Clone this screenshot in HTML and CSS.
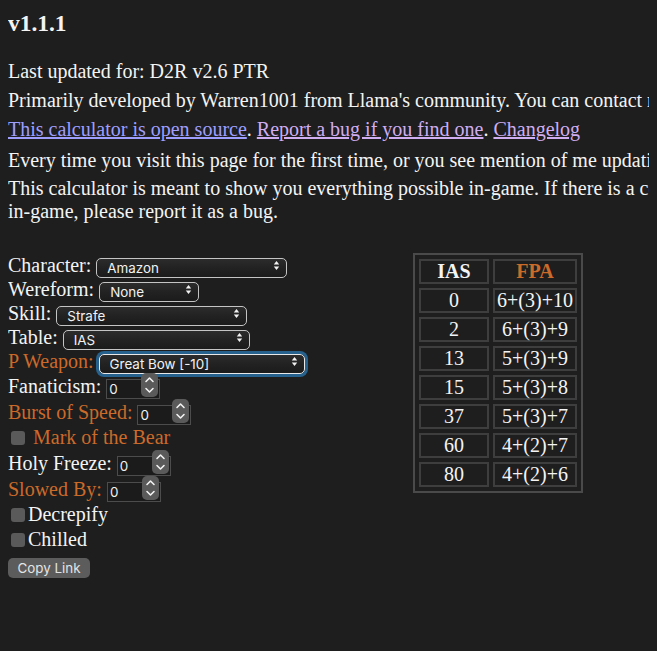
FILE: index.html
```html
<!DOCTYPE html>
<html lang="en">
<head>
<meta charset="utf-8">
<title>D2R Breakpoint Calculator</title>
<link rel="stylesheet" href="styles.css">
</head>
<body>
<h3 class="version">v1.1.1</h3>
<div class="intro">
  <p>Last updated for: D2R v2.6 PTR</p>
  <p>Primarily developed by Warren1001 from Llama's community. You can contact me on Discord.</p>
  <p class="links"><a class="link" href="#">This calculator is open source</a>. <a class="visited" href="#">Report a bug if you find one</a>. <a class="visited" href="#">Changelog</a></p>
  <p class="refresh">Every time you visit this page for the first time, or you see mention of me updating it, do a hard refresh.</p>
  <p>This calculator is meant to show you everything possible in-game. If there is a combination that is not possible <span class="nowrap">in-game,</span> please report it as a bug.</p>
</div>
<div class="main">
  <div class="form">
    <div class="row row-sel"><span class="lbl">Character:</span><span class="sel w-char"><select><option>Amazon</option></select><svg class="arrows" viewBox="0 0 7 11" width="7" height="11"><path d="M3.5 1 L6.2 4.6 H0.8 Z M3.5 10 L6.2 6.4 H0.8 Z"/></svg></span></div>
    <div class="row row-sel"><span class="lbl">Wereform:</span><span class="sel w-were"><select><option>None</option></select><svg class="arrows" viewBox="0 0 7 11" width="7" height="11"><path d="M3.5 1 L6.2 4.6 H0.8 Z M3.5 10 L6.2 6.4 H0.8 Z"/></svg></span></div>
    <div class="row row-sel"><span class="lbl">Skill:</span><span class="sel w-skill"><select><option>Strafe</option></select><svg class="arrows" viewBox="0 0 7 11" width="7" height="11"><path d="M3.5 1 L6.2 4.6 H0.8 Z M3.5 10 L6.2 6.4 H0.8 Z"/></svg></span></div>
    <div class="row row-sel"><span class="lbl">Table:</span><span class="sel w-table"><select><option>IAS</option></select><svg class="arrows" viewBox="0 0 7 11" width="7" height="11"><path d="M3.5 1 L6.2 4.6 H0.8 Z M3.5 10 L6.2 6.4 H0.8 Z"/></svg></span></div>
    <div class="row row-pw"><span class="lbl orange">P Weapon:</span><span class="sel w-weapon focused"><select><option>Great Bow [-10]</option></select><svg class="arrows" viewBox="0 0 7 11" width="7" height="11"><path d="M3.5 1 L6.2 4.6 H0.8 Z M3.5 10 L6.2 6.4 H0.8 Z"/></svg></span></div>
    <div class="row row-num"><span class="lbl">Fanaticism:</span><span class="num"><input type="number" value="0"><span class="spin"><svg viewBox="0 0 17 24" width="17" height="24"><path d="M5 8.5 L8.5 5 L12 8.5 M5 15.5 L8.5 19 L12 15.5"/></svg></span></span></div>
    <div class="row row-num"><span class="lbl orange">Burst of Speed:</span><span class="num"><input type="number" value="0"><span class="spin"><svg viewBox="0 0 17 24" width="17" height="24"><path d="M5 8.5 L8.5 5 L12 8.5 M5 15.5 L8.5 19 L12 15.5"/></svg></span></span></div>
    <div class="row row-chk"><input class="chk" type="checkbox"><span class="lbl orange chk-gap">Mark of the Bear</span></div>
    <div class="row row-num"><span class="lbl">Holy Freeze:</span><span class="num"><input type="number" value="0"><span class="spin"><svg viewBox="0 0 17 24" width="17" height="24"><path d="M5 8.5 L8.5 5 L12 8.5 M5 15.5 L8.5 19 L12 15.5"/></svg></span></span></div>
    <div class="row row-num"><span class="lbl orange">Slowed By:</span><span class="num"><input type="number" value="0"><span class="spin"><svg viewBox="0 0 17 24" width="17" height="24"><path d="M5 8.5 L8.5 5 L12 8.5 M5 15.5 L8.5 19 L12 15.5"/></svg></span></span></div>
    <div class="row row-chk"><input class="chk" type="checkbox"><span class="lbl">Decrepify</span></div>
    <div class="row row-chk"><input class="chk" type="checkbox"><span class="lbl">Chilled</span></div>
    <button class="copy" type="button">Copy Link</button>
  </div>
  <table class="bp">
    <thead>
      <tr><th class="c1">IAS</th><th class="c2 orange">FPA</th></tr>
    </thead>
    <tbody>
      <tr><td>0</td><td>6+(3)+10</td></tr>
      <tr><td>2</td><td>6+(3)+9</td></tr>
      <tr><td>13</td><td>5+(3)+9</td></tr>
      <tr><td>15</td><td>5+(3)+8</td></tr>
      <tr><td>37</td><td>5+(3)+7</td></tr>
      <tr><td>60</td><td>4+(2)+7</td></tr>
      <tr><td>80</td><td>4+(2)+6</td></tr>
    </tbody>
  </table>
</div>
</body>
</html>
```
FILE: styles.css
```css
html, body {
  overflow: hidden;
}
body {
  margin: 8px;
  background: #1e1e1e;
  color: #f4f4f4;
  font-family: "Liberation Serif", "Times New Roman", serif;
  font-size: 20px;
  line-height: 23px;
}
.version {
  margin: 2px 0 23px;
  font-size: 23.4px;
  line-height: 27px;
  font-weight: bold;
}
.intro {
  width: 920px;
}
.intro p {
  margin: 0 0 6px;
}
.intro .links { margin-bottom: 8px; }
.intro .refresh { margin-bottom: 5px; }
.nowrap { white-space: nowrap; }
.link { color: #9e9eff; }
.visited { color: #d0adf0; }
.orange { color: #cc6a2a; }

.main {
  display: flex;
  align-items: flex-start;
  margin-top: 30px;
}
.form {
  width: 405px;
  flex: none;
}
.row {
  display: flex;
  align-items: center;
  gap: 5px;
}
.row-sel { height: 24px; }
.row-pw { height: 24px; }
.row-num { height: 26px; }
.row-chk { height: 25px; gap: 0; }

.sel {
  position: relative;
  display: inline-block;
  height: 20px;
}
.sel select {
  -webkit-appearance: none;
  appearance: none;
  box-sizing: border-box;
  width: 100%;
  height: 20px;
  margin: 0;
  padding: 0 0 0 10px;
  border: 1px solid #c4c4c4;
  border-radius: 5px;
  background: linear-gradient(#2c2c2c, #222 50%, #1b1b1b);
  color: #f2f2f2;
  font-family: Inter, "Liberation Sans", sans-serif;
  font-size: 13.4px;
  line-height: 18px;
  outline: none;
}
.arrows {
  position: absolute;
  right: 7px;
  top: 5px;
  fill: #f2f2f2;
  pointer-events: none;
}
.w-char { width: 191px; }
.w-were { width: 100px; }
.w-skill { width: 191px; }
.w-table { width: 187px; }
.w-weapon { width: 206px; }
.focused select {
  border-color: #e8e8e8;
  box-shadow: 0 0 0 3px #25618c;
}

.num {
  position: relative;
  display: inline-block;
  width: 54px;
  height: 20px;
}
.num input {
  box-sizing: border-box;
  width: 54px;
  height: 20px;
  margin: 0;
  padding: 0 0 0 2px;
  border: 1px solid #4c4c4c;
  background: #1b1b1b;
  color: #f0f0f0;
  font-family: Inter, "Liberation Sans", sans-serif;
  font-size: 13.4px;
  -moz-appearance: textfield;
}
.num input::-webkit-inner-spin-button,
.num input::-webkit-outer-spin-button {
  -webkit-appearance: none;
  margin: 0;
}
.spin {
  position: absolute;
  right: 2px;
  top: -3px;
  width: 17px;
  height: 24px;
  border-radius: 5px;
  background: #5a5a5a;
}
.spin svg {
  display: block;
  fill: none;
  stroke: #f2f2f2;
  stroke-width: 1.6;
  stroke-linecap: round;
  stroke-linejoin: round;
}

.chk {
  -webkit-appearance: none;
  appearance: none;
  width: 14px;
  height: 14px;
  margin: 0 3px 0 3px;
  border-radius: 3px;
  background: #5a5a5a;
}
.chk-gap { margin-left: 5px; }

.copy {
  margin-top: 6px;
  height: 20px;
  width: 82px;
  padding: 0;
  border: none;
  border-radius: 5px;
  background: #5c5c5c;
  color: #e4e4e4;
  font-family: Inter, "Liberation Sans", sans-serif;
  font-size: 13.4px;
}

.bp {
  border: 2px solid #4a4a4a;
  border-spacing: 4px;
  text-align: center;
}
.bp th, .bp td {
  border: 2px solid #3e3e3e;
  padding: 0 2px;
  height: 21px;
  line-height: 21px;
}
.bp th { font-weight: bold; }
.bp .c1 { width: 62px; }
.bp .c2 { width: 76px; }
```
